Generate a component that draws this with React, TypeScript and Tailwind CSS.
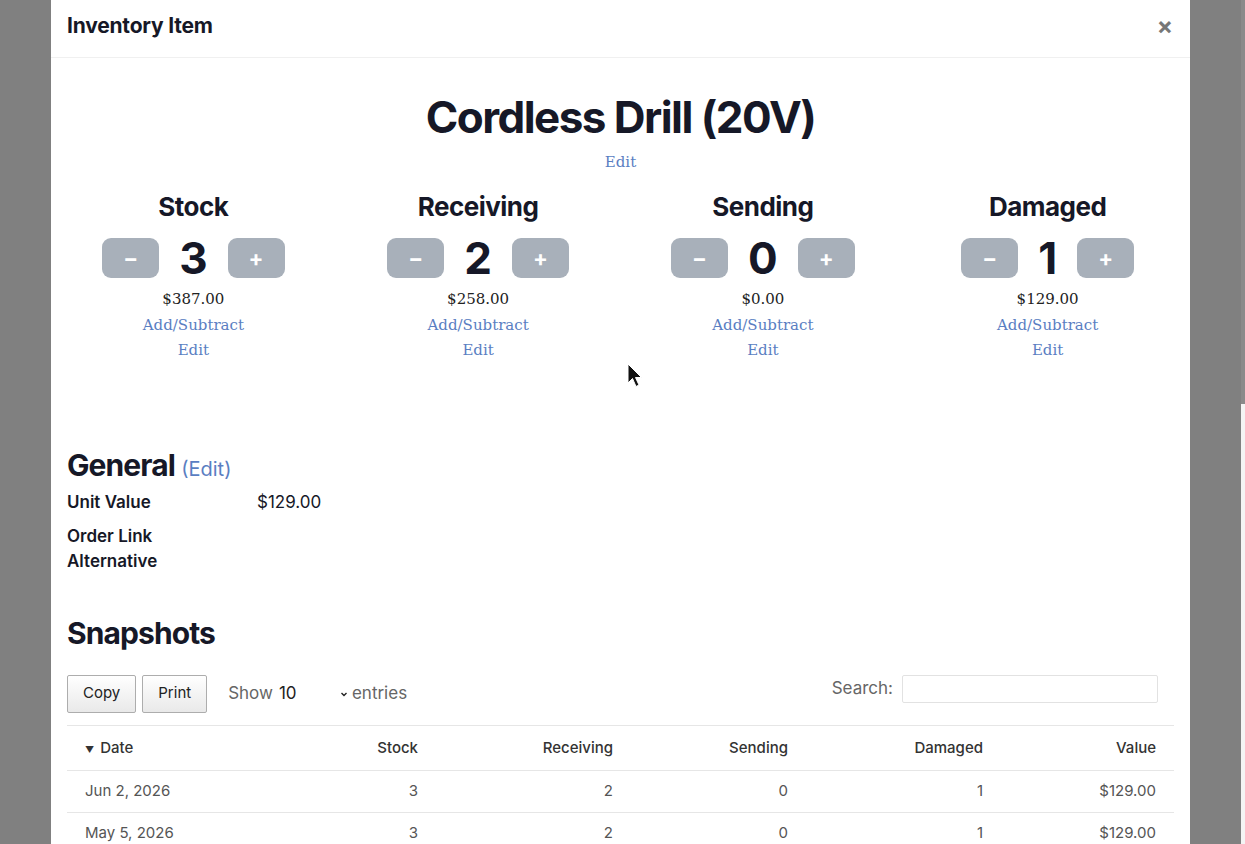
import React from "react";

const sans = "font-['Inter','Noto_Sans',sans-serif]";
const serif = "font-['DejaVu_Serif','Liberation_Serif',serif]";

const counters = [
    { label: "Stock", value: 3, total: "$387.00" },
    { label: "Receiving", value: 2, total: "$258.00" },
    { label: "Sending", value: 0, total: "$0.00" },
    { label: "Damaged", value: 1, total: "$129.00" },
];

const rows = [
    { date: "Jun 2, 2026", stock: 3, receiving: 2, sending: 0, damaged: 1, value: "$129.00" },
    { date: "May 5, 2026", stock: 3, receiving: 2, sending: 0, damaged: 1, value: "$129.00" },
];

function Counter({ label, value, total }: { label: string; value: number; total: string }) {
    return <div className="flex flex-col items-center">
        <h3 className="text-[26px] leading-[32px] font-bold tracking-[-0.02em] text-[#161827]">{label}</h3>
        <div className="mt-[15px] flex items-center">
            <button className="flex h-[40px] w-[57px] items-center justify-center rounded-[9px] bg-[#a8b0ba] text-[22px] font-bold text-white">−</button>
            <span className="mx-[20px] text-center text-[44px] leading-[40px] font-bold text-[#161827]">{value}</span>
            <button className="flex h-[40px] w-[57px] items-center justify-center rounded-[9px] bg-[#a8b0ba] text-[22px] font-bold text-white">+</button>
        </div>
        <div className={`${serif} mt-[9px] flex flex-col items-center text-[15px] leading-[25.5px]`}>
            <span className="text-[#222]">{total}</span>
            <a className="text-[#5a7ec2]">Add/Subtract</a>
            <a className="text-[#5a7ec2]">Edit</a>
        </div>
    </div>
}

export default function App() {
    return <div className={`${sans} relative flex h-[844px] overflow-hidden bg-[#808080]`}>
        <div className="ml-[51px] w-[1139px] shrink-0 bg-white">
            <div className="flex h-[58px] items-center justify-between border-b border-[#f0f0f0] pb-[6px] pl-4 pr-[17px]">
                <h2 className="text-[21px] font-bold tracking-[-0.01em] text-[#161827]">Inventory Item</h2>
                <span className="text-[24px] leading-none font-bold text-[#777]">×</span>
            </div>

            <div className="flex flex-col items-center pt-[31px]">
                <h1 className="text-[44px] leading-[56px] font-bold tracking-[-0.035em] text-[#161827]">Cordless Drill (20V)</h1>
                <a className={`${serif} mt-[5px] text-[15px] leading-[24px] text-[#5a7ec2]`}>Edit</a>
            </div>

            <div className="mt-[17px] grid grid-cols-4">
                {counters.map((c) => <Counter key={c.label} {...c} />)}
            </div>

            <div className="px-4 pt-[83px]">
                <h2 className="text-[30px] leading-[36px] font-bold tracking-[-0.03em] text-[#161827]">
                    General <span className="text-[20px] font-normal tracking-normal text-[#5a7ec2]">(Edit)</span>
                </h2>
                <div className="grid grid-cols-[190px_1fr] text-[17px] text-[#161827]">
                    <span className="leading-[30px] font-semibold">Unit Value</span>
                    <span className="leading-[30px]">$129.00</span>
                    <span className="mt-[7px] leading-[25px] font-semibold">Order Link</span>
                    <span />
                    <span className="leading-[25px] font-semibold">Alternative</span>
                    <span />
                </div>

                <h2 className="mt-[41px] text-[30px] leading-[36px] font-bold tracking-[-0.03em] text-[#161827]">Snapshots</h2>

                <div className="mt-[24px] flex items-center justify-between pr-4">
                    <div className="flex items-center">
                        <button className="h-[38px] rounded-[2px] border border-[#adadad] bg-gradient-to-b from-white to-[#e9e9e9] px-[15px] text-[15px] text-[#222]">Copy</button>
                        <button className="ml-[6px] h-[38px] rounded-[2px] border border-[#adadad] bg-gradient-to-b from-white to-[#e9e9e9] px-[15px] text-[15px] text-[#222]">Print</button>
                        <div className="ml-[21px] flex items-center text-[17px] text-[#666]">
                            <span>Show</span>
                            <span className="ml-[6px] w-[60px] text-[#222]">10</span>
                            <svg width="10" height="10" viewBox="0 0 10 10" className="mr-[3px]"><path d="M2.5 4 L5 6.5 L7.5 4" fill="none" stroke="#222" strokeWidth="1.4" /></svg>
                            <span>entries</span>
                        </div>
                    </div>
                    <div className="mb-[10px] flex items-center text-[17px] text-[#666]">
                        <span>Search:</span>
                        <input className="ml-[9px] h-[28px] w-[256px] rounded-[2px] border border-[#e2e2e2]" />
                    </div>
                </div>

                <table className="mt-[12px] w-full table-fixed border-collapse text-[15px]">
                    <colgroup>
                        <col className="w-[173px]" />
                        <col className="w-[196px]" />
                        <col className="w-[195px]" />
                        <col className="w-[175px]" />
                        <col className="w-[195px]" />
                        <col className="w-[173px]" />
                    </colgroup>
                    <thead>
                        <tr className="h-[45px] border-y border-[#e6e6e6] text-[#333]">
                            <th className="px-[18px] pt-[2px] text-left font-medium">
                                <span className="mr-[6px] text-[9px]">▼</span>Date
                            </th>
                            <th className="px-[18px] pt-[2px] text-right font-medium">Stock</th>
                            <th className="px-[18px] pt-[2px] text-right font-medium">Receiving</th>
                            <th className="px-[18px] pt-[2px] text-right font-medium">Sending</th>
                            <th className="px-[18px] pt-[2px] text-right font-medium">Damaged</th>
                            <th className="px-[18px] pt-[2px] text-right font-medium">Value</th>
                        </tr>
                    </thead>
                    <tbody className="text-[#555]">
                        {rows.map((r) => <tr key={r.date} className="h-[42px] border-b border-[#e6e6e6]">
                            <td className="px-[18px] text-left">{r.date}</td>
                            <td className="px-[18px] text-right">{r.stock}</td>
                            <td className="px-[18px] text-right">{r.receiving}</td>
                            <td className="px-[18px] text-right">{r.sending}</td>
                            <td className="px-[18px] text-right">{r.damaged}</td>
                            <td className="px-[18px] text-right">{r.value}</td>
                        </tr>)}
                    </tbody>
                </table>
            </div>
        </div>

        <div className="ml-auto flex h-full w-[4px] flex-col bg-[#f4f4f4]">
            <div className="h-[404px] bg-[#8a8a8a]" />
        </div>

        <svg className="absolute left-[627px] top-[363px]" width="16" height="26" viewBox="0 0 16 26">
            <path d="M1 1 L1 20 L5.5 15.5 L9 23.5 L12 22 L8.5 14.5 L14.5 14.5 Z" fill="#111" stroke="white" strokeWidth="1" />
        </svg>
    </div>
}
